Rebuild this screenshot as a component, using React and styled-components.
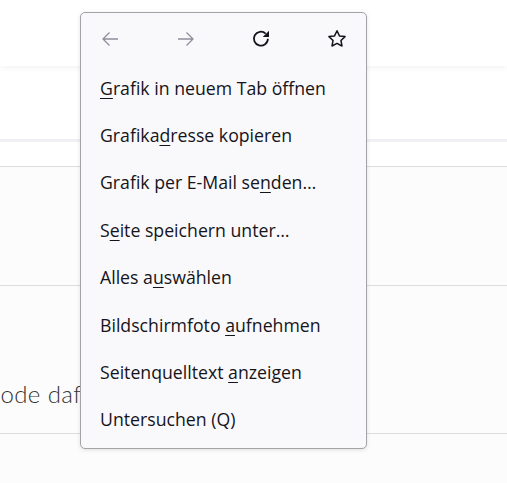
import React from "react";
import styled, { createGlobalStyle } from "styled-components";

const GlobalStyle = createGlobalStyle`
  html, body {
    margin: 0;
    padding: 0;
    background: #fcfcfc;
    overflow: hidden;
  }
  body {
    font-family: "Open Sans", "Noto Sans", sans-serif;
  }
`;

const Page = styled.div`
  position: relative;
  width: 507px;
  height: 483px;
  overflow: hidden;
`;

const Header = styled.header`
  height: 66px;
  background: #fff;
  box-shadow: 0 2px 6px rgba(0, 0, 0, 0.05);
  position: relative;
  z-index: 1;
`;

const SubBar = styled.div`
  height: 73px;
  background: #fff;
  border-bottom: 3px solid #f0f0f4;
`;

const Spacer = styled.div`
  height: 24px;
  background: #fff;
  border-bottom: 1px solid #dcdcdc;
`;

const Row = styled.div`
  height: ${(p) => p.$h}px;
  border-bottom: 1px solid #dcdcdc;
  display: flex;
  align-items: flex-end;
  padding-bottom: ${(p) => p.$pb || 0}px;
  box-sizing: border-box;
`;

const RowText = styled.span`
  font-family: "Lato", sans-serif;
  font-weight: 300;
  font-size: 24px;
  letter-spacing: 0.4px;
  color: #333;
  margin-left: -16px;
  white-space: nowrap;
`;

const Menu = styled.div`
  position: absolute;
  left: 80px;
  top: 12px;
  width: 287px;
  height: 437px;
  box-sizing: border-box;
  background: #f9f9fb;
  border: 1px solid #a3a3a8;
  border-radius: 5px;
  box-shadow: 0 1px 4px rgba(0, 0, 0, 0.12);
  z-index: 5;
  padding-top: 8px;
`;

const NavRow = styled.div`
  display: flex;
  justify-content: space-between;
  align-items: center;
  height: 36px;
  padding: 0 19px;
  margin-bottom: 7px;
`;

const NavButton = styled.div`
  width: 20px;
  height: 20px;
  display: flex;
  justify-content: center;
  align-items: center;
  color: ${(p) => (p.$disabled ? "#8f8f9d" : "#15141a")};
`;

const Item = styled.div`
  height: 47.4px;
  display: flex;
  align-items: center;
  padding-left: 19px;
  font-family: "Open Sans", "Noto Sans", sans-serif;
  font-size: 17.7px;
  color: #15141a;
`;

const Label = styled.span`
  white-space: pre;
`;

const Key = styled.span`
  text-decoration: underline;
  text-underline-offset: 3px;
  text-decoration-thickness: 1px;
`;

const Back = () => (
  <svg width="18" height="18" viewBox="0 0 18 18" fill="none" stroke="currentColor" strokeWidth="1.3">
    <path d="M17 9H2M8.5 2.5L2 9l6.5 6.5" />
  </svg>
);

const Forward = () => (
  <svg width="18" height="18" viewBox="0 0 18 18" fill="none" stroke="currentColor" strokeWidth="1.3">
    <path d="M1 9h15M9.5 2.5L16 9l-6.5 6.5" />
  </svg>
);

const Reload = () => (
  <svg width="20" height="20" viewBox="0 0 18 18" fill="none">
    <path d="M15.2 8.8A6.3 6.3 0 1 1 13.2 4.1" stroke="currentColor" strokeWidth="1.6" />
    <path d="M16.2 1.6v5.6h-5.6z" fill="currentColor" />
  </svg>
);

const Star = () => (
  <svg width="20" height="20" viewBox="0 0 20 20" fill="none" stroke="currentColor" strokeWidth="1.5" strokeLinejoin="round">
    <path d="M10 1.8l2.45 5.1 5.6.7-4.1 3.85 1.05 5.55L10 14.3 5 17l1.05-5.55L1.95 7.6l5.6-.7z" />
  </svg>
);

const items = [
  [<Key key="k">G</Key>, "rafik in neuem Tab öffnen"],
  ["Grafika", <Key key="k">d</Key>, "resse kopieren"],
  ["Grafik per E-Mail se", <Key key="k">n</Key>, "den…"],
  ["S", <Key key="k">e</Key>, "ite speichern unter…"],
  ["Alles a", <Key key="k">u</Key>, "swählen"],
  ["Bildschirmfoto ", <Key key="k">a</Key>, "ufnehmen"],
  ["Seitenquelltext ", <Key key="k">a</Key>, "nzeigen"],
  ["Untersuchen (Q)"],
];

export default function App() {
  return (
    <Page>
      <GlobalStyle />
      <Header />
      <SubBar />
      <Spacer />
      <Row $h={119} />
      <Row $h={148} $pb={25}>
        <RowText>Code dafür</RowText>
      </Row>

      <Menu>
        <NavRow>
          <NavButton $disabled><Back /></NavButton>
          <NavButton $disabled><Forward /></NavButton>
          <NavButton><Reload /></NavButton>
          <NavButton><Star /></NavButton>
        </NavRow>
        {items.map((parts, i) => (
          <Item key={i}>
            <Label>{parts}</Label>
          </Item>
        ))}
      </Menu>
    </Page>
  );
}
